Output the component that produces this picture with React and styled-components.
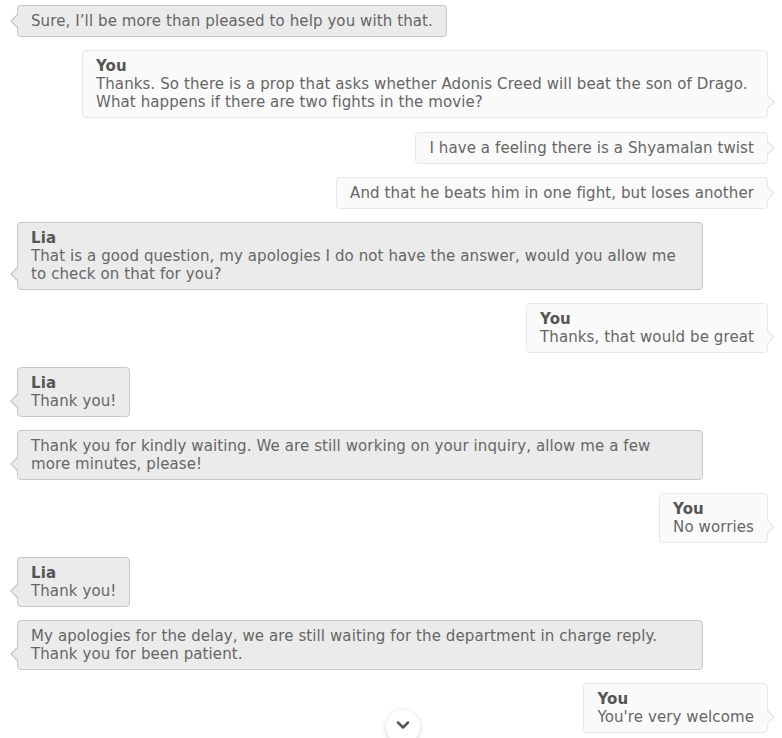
import React from "react";
import styled, { createGlobalStyle, css } from "styled-components";
import { ChevronDown } from "lucide-react";

const GlobalStyle = createGlobalStyle`
  html, body {
    margin: 0;
    padding: 0;
    background: #fff;
    overflow: hidden;
  }
  body {
    font-family: "DejaVu Sans", Verdana, sans-serif;
    font-size: 15px;
    letter-spacing: 0.1px;
    color: #666;
  }
`;

const messages = [
  { from: "agent", text: "Sure, I’ll be more than pleased to help you with that." },
  {
    from: "user",
    name: "You",
    text: "Thanks. So there is a prop that asks whether Adonis Creed will beat the son of Drago. What happens if there are two fights in the movie?",
  },
  { from: "user", text: "I have a feeling there is a Shyamalan twist" },
  { from: "user", text: "And that he beats him in one fight, but loses another" },
  {
    from: "agent",
    name: "Lia",
    text: "That is a good question, my apologies I do not have the answer, would you allow me to check on that for you?",
  },
  { from: "user", name: "You", text: "Thanks, that would be great" },
  { from: "agent", name: "Lia", text: "Thank you!" },
  {
    from: "agent",
    text: "Thank you for kindly waiting. We are still working on your inquiry, allow me a few more minutes, please!",
  },
  { from: "user", name: "You", text: "No worries" },
  { from: "agent", name: "Lia", text: "Thank you!" },
  {
    from: "agent",
    text: "My apologies for the delay, we are still waiting for the department in charge reply. Thank you for been patient.",
  },
  { from: "user", name: "You", text: "You're very welcome" },
];

const App = () => {
  return (
    <>
      <GlobalStyle />
      <Conversation>
        {messages.map((m, i) => (
          <Row key={i} $side={m.from}>
            <Bubble $side={m.from}>
              {m.name && <Name>{m.name}</Name>}
              <Text>{m.text}</Text>
            </Bubble>
          </Row>
        ))}
      </Conversation>
      <ScrollDown aria-label="Scroll down">
        <ChevronDown size={20} strokeWidth={3} color="#555" />
      </ScrollDown>
    </>
  );
};

const Conversation = styled.div`
  display: flex;
  flex-direction: column;
  gap: 13.3px;
  padding: 5px 14px 0 17px;
`;

const Row = styled.div`
  display: flex;
  justify-content: ${(p) => (p.$side === "user" ? "flex-end" : "flex-start")};
`;

const agentColors = { bg: "#ebebeb", border: "#c8c8c8" };
const userColors = { bg: "#fafafa", border: "#e8e8e8" };

const Bubble = styled.div`
  position: relative;
  box-sizing: border-box;
  max-width: 686px;
  padding: 6px 13px;
  line-height: 18px;
  border-radius: 4px;
  border: 1px solid;

  ${(p) => {
    const c = p.$side === "user" ? userColors : agentColors;
    return css`
      background: ${c.bg};
      border-color: ${c.border};

      &::before,
      &::after {
        content: "";
        position: absolute;
        bottom: 8px;
        width: 0;
        height: 0;
        border-top: 7px solid transparent;
        border-bottom: 7px solid transparent;
      }

      ${p.$side === "user"
        ? css`
            &::before {
              right: -8px;
              border-left: 7px solid ${c.border};
            }
            &::after {
              right: -6px;
              border-left: 7px solid ${c.bg};
            }
          `
        : css`
            &::before {
              left: -8px;
              border-right: 7px solid ${c.border};
            }
            &::after {
              left: -6px;
              border-right: 7px solid ${c.bg};
            }
          `}
    `;
  }}
`;

const Name = styled.div`
  font-weight: bold;
  color: #555;
`;

const Text = styled.div`
  color: #666;
`;

const ScrollDown = styled.button`
  position: fixed;
  left: 386px;
  top: 710px;
  width: 34px;
  height: 34px;
  border-radius: 50%;
  border: none;
  background: #fff;
  box-shadow: 0 1px 5px rgba(0, 0, 0, 0.18);
  display: flex;
  align-items: center;
  justify-content: center;
  padding: 0;
  padding-bottom: 4px;
  cursor: pointer;
`;

export default App;
